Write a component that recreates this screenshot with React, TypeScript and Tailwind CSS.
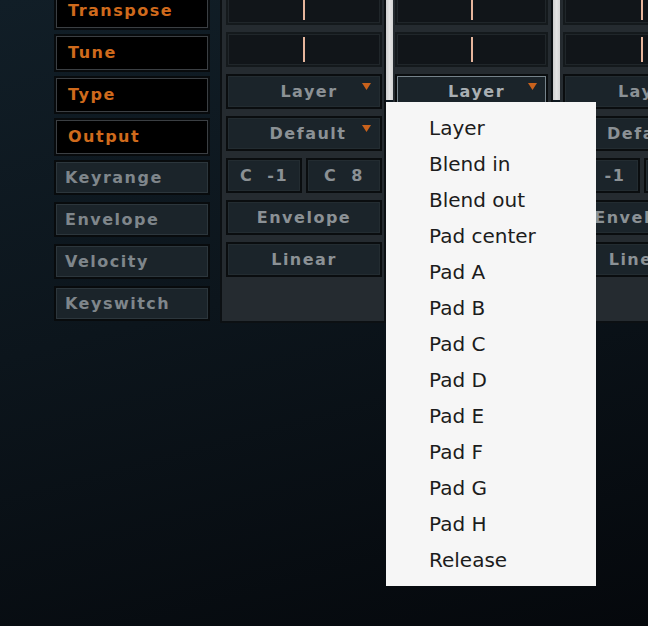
import type { ReactNode } from 'react'

const pixel = "font-['DejaVu_Sans',sans-serif] font-bold text-[16px] tracking-[1.5px]"

const labels = [
  { text: 'Transpose', active: true },
  { text: 'Tune', active: true },
  { text: 'Type', active: true },
  { text: 'Output', active: true },
  { text: 'Keyrange', active: false },
  { text: 'Envelope', active: false },
  { text: 'Velocity', active: false },
  { text: 'Keyswitch', active: false },
]

const menuItems = [
  'Layer', 'Blend in', 'Blend out', 'Pad center', 'Pad A', 'Pad B', 'Pad C',
  'Pad D', 'Pad E', 'Pad F', 'Pad G', 'Pad H', 'Release',
]

function Label({ text, active }: { text: string; active: boolean }) {
  if (active) {
    return (
      <div className="h-[38px] border-2 border-[#080b0d]">
        <div className={`h-full border border-[#3b3f43] bg-black pl-[11px] flex items-center text-[#cf6a1c] ${pixel}`}>
          {text}
        </div>
      </div>
    )
  }
  return (
    <div className="h-[38px] pb-[3px]">
      <div className="h-full border-2 border-[#080b0d]">
        <div className={`h-full border border-[#2c363c] bg-[#1b242a] pl-[8px] flex items-center text-[#7f868b] ${pixel}`}>
          {text}
        </div>
      </div>
    </div>
  )
}

function Slider() {
  return (
    <div className="h-[35px] border-2 border-[#14191c] bg-[#111519] shadow-[inset_0_0_0_1px_#20262a] flex justify-center py-[3px]">
      <div className="w-[2px] h-full bg-[#e6b59c]" />
    </div>
  )
}

function Triangle() {
  return (
    <svg width="9" height="7" viewBox="0 0 9 7" className="absolute right-[9px] top-[7px]">
      <path d="M0 0 H9 L4.5 7 Z" fill="#c9621c" />
    </svg>
  )
}

function Box({ children, bright, arrow, className = '' }: { children: ReactNode; bright?: boolean; arrow?: boolean; className?: string }) {
  return (
    <div
      className={`relative h-[35px] border-2 border-[#0a0d0f] bg-[#1b242a] flex items-center justify-center whitespace-pre ${pixel} ${
        bright ? 'shadow-[inset_0_0_0_1px_#76838b] text-[#a9afb3]' : 'shadow-[inset_0_0_0_1px_#29323799] text-[#8b9195]'
      } ${className}`}
    >
      {children}
      {arrow && <Triangle />}
    </div>
  )
}

function Column({ bright, className }: { bright?: boolean; className: string }) {
  return (
    <div className={`bg-[#252b30] border-[#0c1013] flex flex-col gap-[7px] pb-[44px] ${className}`}>
      <Slider />
      <Slider />
      <Box arrow bright={bright} className="pl-[10px]">Layer</Box>
      <Box arrow className="pl-[8px]">Default</Box>
      <div className="flex gap-[4px]">
        <Box className="flex-1">C  -1</Box>
        <Box className="flex-1">C  8</Box>
      </div>
      <Box>Envelope</Box>
      <Box>Linear</Box>
    </div>
  )
}

function Separator() {
  return <div className="w-[7px] h-[110px] shrink-0 self-start bg-gradient-to-r from-[#cfcfcf] via-[#e4e4e4] to-[#d4d4d4]" />
}

export default function App() {
  return (
    <div className="relative w-[648px] h-[626px] overflow-hidden bg-[linear-gradient(165deg,#111e27_0%,#0c151c_45%,#05080c_100%)]">
      <div className="flex items-start pl-[54px]">
        <div className="w-[156px] shrink-0 flex flex-col gap-[4px] -mt-[8px]">
          {labels.map(l => <Label key={l.text} {...l} />)}
        </div>
        <div className="ml-[10px] flex items-start -mt-[10px]">
          <Column className="w-[166px] shrink-0 border-l-2 border-r-2 border-b-2 pl-[4px] pr-[2px]" />
          <Separator />
          <Column bright className="w-[160px] shrink-0 border-r-2 border-b-2 pl-[2px] pr-[3px]" />
          <Separator />
          <Column className="w-[166px] shrink-0 border-r-2 border-b-2 pl-[3px] pr-[4px]" />
        </div>
      </div>

      <div className="absolute left-[386px] top-[102px] w-[210px] h-[484px] bg-[#f6f6f6] py-[8px]">
        {menuItems.map(item => (
          <div key={item} className="h-[36px] flex items-center pl-[43px] font-['DejaVu_Sans',sans-serif] text-[20px] text-[#1c1c1c]">
            {item}
          </div>
        ))}
      </div>
    </div>
  )
}
